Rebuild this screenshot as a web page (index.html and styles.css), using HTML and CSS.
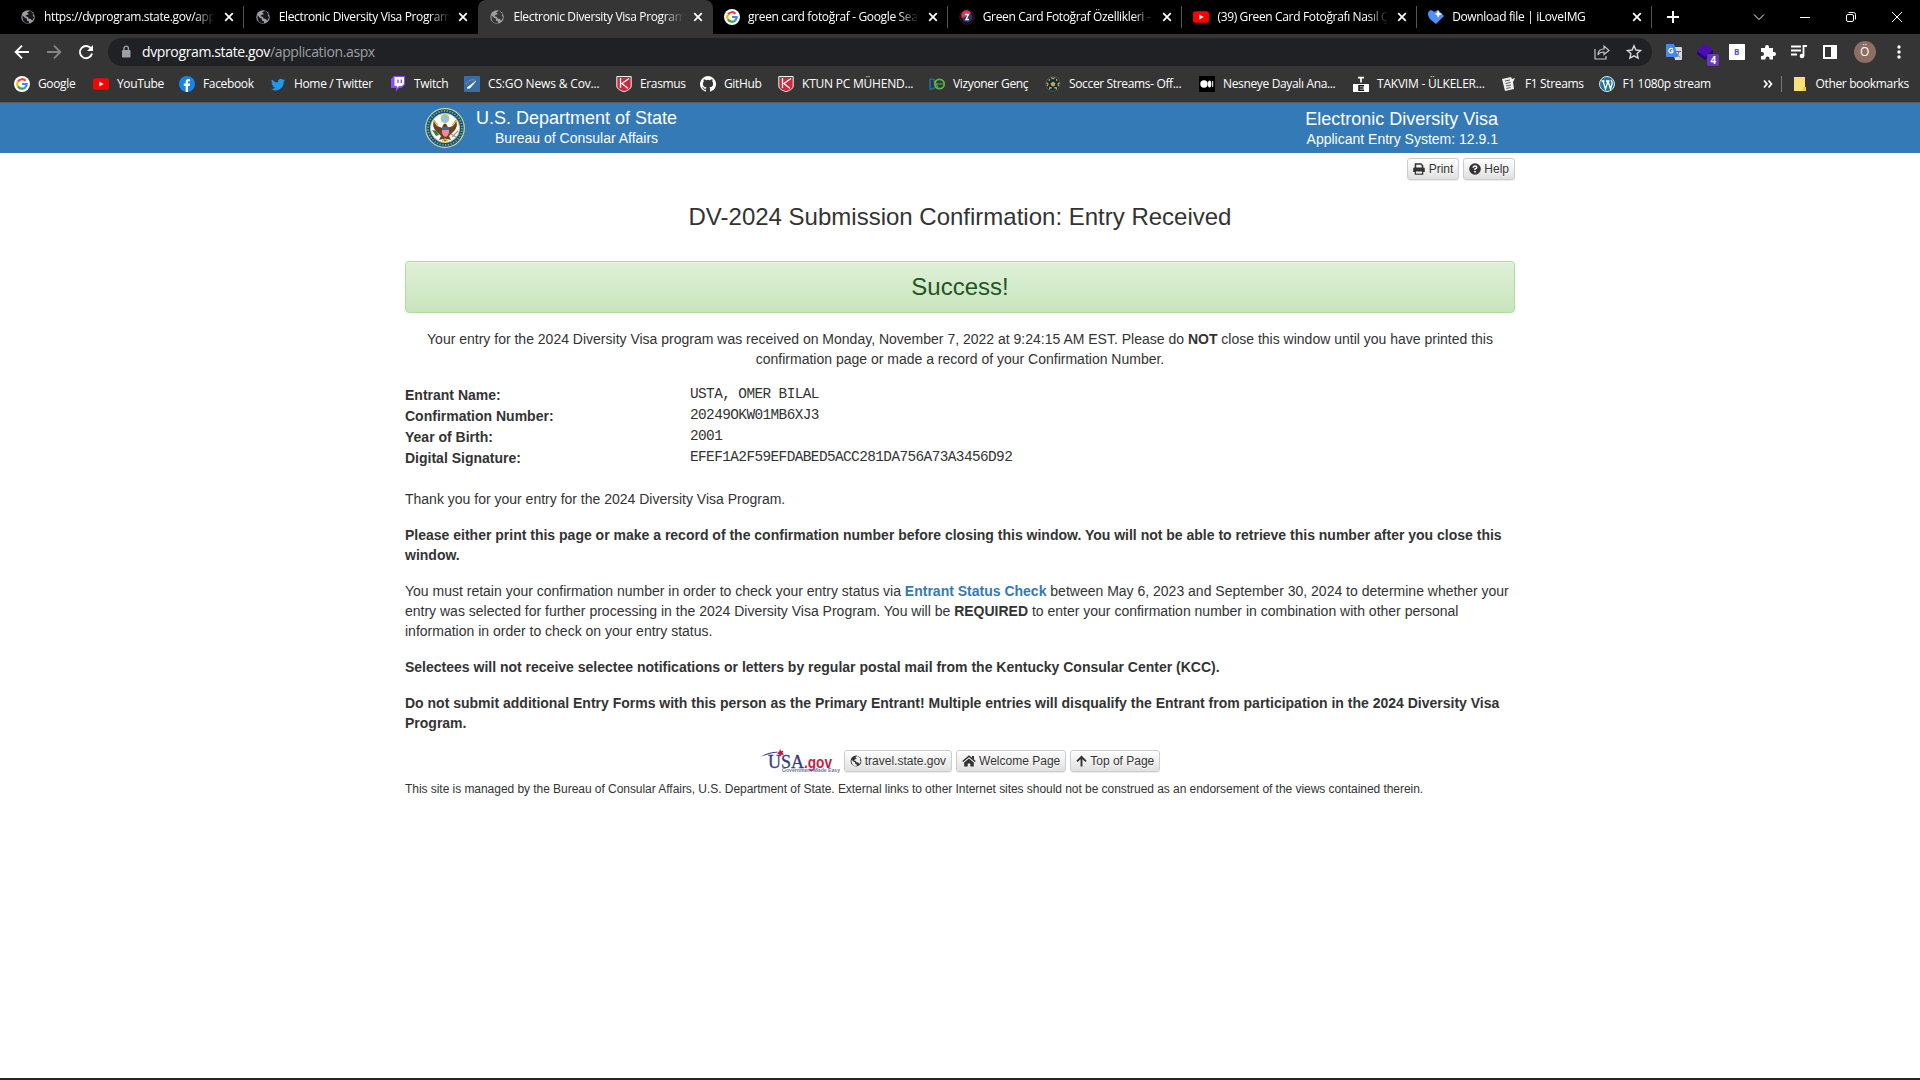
FILE: index.html
```html
<!DOCTYPE html>
<html lang="en">
<head>
<meta charset="utf-8">
<title>Electronic Diversity Visa Program</title>
<link rel="stylesheet" href="styles.css">
</head>
<body>
<svg class="defs" aria-hidden="true">
  <symbol id="globe" viewBox="0 0 16 16"><circle cx="8" cy="8" r="7.2" fill="currentColor"/><path class="hole" d="M2.2 6.2 5 9l1.8.5L7 12l2 .5V15C4 15 1.5 12 2.2 6.200zM7 2.800 10.500 1.200 14 5l-1 1.500 1.500 2-2 3.500-1.500-2-2.500-.5L8 8l-3-1 2-1.500 2-.5z"/></symbol>
  <symbol id="x" viewBox="0 0 10 10"><path d="m1.200 1.200 7.600 7.600m0-7.600-7.600 7.600" stroke="currentColor" stroke-width="1.700"/></symbol>
  <symbol id="google" viewBox="0 0 16 16"><circle cx="8" cy="8" r="8" fill="#fff"/><g fill="none" stroke-width="2.200"><path d="M11.500 4.700A4.700 4.700 0 0 0 4 5.600" stroke="#ea4335"/><path d="M4 5.500a4.700 4.700 0 0 0 0 5" stroke="#fbbc05"/><path d="M4 10.400a4.700 4.700 0 0 0 7.200 1.100" stroke="#34a853"/><path d="M11.100 11.600A4.700 4.700 0 0 0 12.700 8H8" stroke="#4285f4"/></g></symbol>
  <symbol id="youtube" viewBox="0 0 16 16"><rect y="2.300" width="16" height="11.400" rx="2.500" fill="red"/><path d="m6.300 5.500 4.400 2.500-4.400 2.500z" fill="#fff"/></symbol>
  <symbol id="ktun" viewBox="0 0 16 16"><path d="M.8.5h14.400v9.500c0 3-4 4.700-7.200 5.700C4.800 14.700.8 13 .8 10z" fill="#c92b3d" stroke="#eee"/><path d="M4.500 2v10M13 2.500 6 7.500l6 5" fill="none" stroke="#fff" stroke-width="1.300"/></symbol>
</svg>

<header class="browser">
  <div class="tabstrip">
    <div class="tab"><svg class="fav grey"><use href="#globe"/></svg><span class="name"><b>https://dvprogram.state.gov/app</b></span><svg class="close"><use href="#x"/></svg></div>
    <div class="tab bare"><svg class="fav grey"><use href="#globe"/></svg><span class="name"><b>Electronic Diversity Visa Program</b></span><svg class="close"><use href="#x"/></svg></div>
    <div class="tab active"><svg class="fav grey"><use href="#globe"/></svg><span class="name"><b>Electronic Diversity Visa Program</b></span><svg class="close"><use href="#x"/></svg></div>
    <div class="tab"><svg class="fav"><use href="#google"/></svg><span class="name"><b>green card fotoğraf - Google Sea</b></span><svg class="close"><use href="#x"/></svg></div>
    <div class="tab"><svg class="fav" viewBox="0 0 16 16"><circle cx="8" cy="8" r="7.300" fill="#15091a" stroke="#46101c"/><circle cx="8" cy="8" r="5.300" fill="#293566"/><path d="M3 9a5 5 0 0 1 9-5L8 7z" fill="#e23856"/><path d="M6 5.500h3.500L7 10.500h3" stroke="#fff" stroke-width="1.400" fill="none"/></svg><span class="name"><b>Green Card Fotoğraf Özellikleri -</b></span><svg class="close"><use href="#x"/></svg></div>
    <div class="tab"><svg class="fav"><use href="#youtube"/></svg><span class="name"><b>(39) Green Card Fotoğrafı Nasıl Ç</b></span><svg class="close"><use href="#x"/></svg></div>
    <div class="tab"><svg class="fav" viewBox="0 0 16 16"><path d="M0 5c0-4 4-5 6-2l2-1c1-1 3-1 4 1l4 4-8 8C4 12 0 9 0 5z" fill="#4d90fe"/><path d="m10 1 1.500 3 3 1-3 1-1.500 3-1-3-2-1 2-1z" fill="#fff"/></svg><span class="name"><b>Download file | iLoveIMG</b></span><svg class="close"><use href="#x"/></svg></div>
    <svg class="plus" viewBox="0 0 14 14"><path d="M7 1v12M1 7h12" stroke="#fff" stroke-width="2"/></svg>
    <div class="winctl">
      <svg viewBox="0 0 12 12"><path d="m1 3.500 5 5 5-5"/></svg>
      <svg viewBox="0 0 12 12"><path d="M1 6.500h10"/></svg>
      <svg viewBox="0 0 12 12"><rect x="1.500" y="3.500" width="7" height="7" rx="1.500"/><path d="M3.500 1.500H8.500a2 2 0 0 1 2 2V8.500"/></svg>
      <svg viewBox="0 0 12 12"><path d="m1 1 10 10M11 1 1 11"/></svg>
    </div>
  </div>

  <div class="toolbar">
    <svg class="nav" viewBox="0 0 16 16"><path d="M15 8H2m6-6.300L1.700 8 8 14.300"/></svg>
    <svg class="nav dim" viewBox="0 0 16 16"><path d="M1 8h13M8 1.700 14.300 8 8 14.300"/></svg>
    <svg class="nav" viewBox="0 0 16 16"><path d="M13.300 5A6.100 6.100 0 1 0 14 9.500"/><path d="M15 1v6H9z" fill="#fff" stroke="none"/></svg>
    <div class="omnibox">
      <svg class="lock" viewBox="0 0 10 14"><rect x="1" y="5" width="8.500" height="7.500" rx="1" fill="#9aa0a6"/><path d="M3 5V3.300a2.200 2.200 0 0 1 4.400 0V5" fill="none" stroke="#9aa0a6" stroke-width="1.400"/></svg>
      <span class="url">dvprogram.state.gov<i>/application.aspx</i></span>
      <svg class="act" viewBox="0 0 16 16"><path d="M1 5v10h11v-3M4 11c0-4 2-6 6-6V2l5 4.500-5 4V8C7 8 5 9 4 11z" fill="none" stroke="#c4c7c9" stroke-width="1.200"/></svg>
      <svg class="act" viewBox="0 0 16 16"><path d="m8 1.700 1.900 4.300 4.700.5-3.500 3.100 1 4.600L8 11.800l-4.100 2.400 1-4.600L1.400 6.500 6.100 6z" fill="none" stroke="#d5d7d9" stroke-width="1.400"/></svg>
    </div>
    <div class="exts">
      <svg viewBox="0 0 16 16"><path d="M6 3h9q1 0 1 1v11q0 1-1 1H9z" fill="#d5d9dd"/><path d="M0 0h8l4 13H1q-1 0-1-1z" fill="#4688f1"/><path d="M7 5.500A2.200 2.200 0 1 0 6.800 8V6.800H5" stroke="#fff" stroke-width="1.200" fill="none"/><path d="M9.500 7.500H15m-2 0q-1 4-3 5m0-3 4 4" stroke="#607080" fill="none"/></svg>
      <span class="cube"><svg viewBox="0 0 16 16"><path d="m0 7 8-7 8 6-8 7z" fill="#4e0ab9"/><path d="m0 7 8 6 8-7v3l-8 7-8-6z" fill="#27066f"/></svg><em>4</em></span>
      <span class="bsq">B</span>
      <svg viewBox="0 0 16 16"><path d="M1 4h4V3a2 2 0 0 1 4 0v1h4v4h1a2 2 0 0 1 0 4h-1v3.500H9.500v-1a2 2 0 0 0-4 0v1H1V12h1a2 2 0 0 0 0-4H1z" fill="#fff"/></svg>
      <svg viewBox="0 0 16 16"><path d="M0 2.500h10M0 6.500h10M0 10.500h6M12.500 12V2H16" stroke="#fff" stroke-width="1.800" fill="none"/><circle cx="11" cy="12" r="2.300" fill="#fff"/></svg>
      <svg viewBox="0 0 16 16"><path d="M1 1h14v14H1zM3 3v10h6V3z" fill="#fff" fill-rule="evenodd"/></svg>
      <span class="avatar">Ö</span>
      <svg viewBox="0 0 16 16"><g fill="#fff"><circle cx="8" cy="3" r="1.700"/><circle cx="8" cy="8" r="1.700"/><circle cx="8" cy="13" r="1.700"/></g></svg>
    </div>
  </div>

  <nav class="bookmarks">
    <a><svg><use href="#google"/></svg><span>Google</span></a>
    <a><svg><use href="#youtube"/></svg><span>YouTube</span></a>
    <a><svg viewBox="0 0 16 16"><circle cx="8" cy="8" r="8" fill="#1585ee"/><path d="M6.700 16V10H4.800V7.500h1.900V6c0-2 1-3 2.900-3l1.500.1v2.100H10c-.8 0-1 .4-1 1v1.300h2.100L10.700 10H9v6z" fill="#fff"/></svg><span>Facebook</span></a>
    <a><svg viewBox="0 0 26 26"><path transform="translate(1 2)" d="M23.600 4.900c-.8.400-1.700.6-2.700.8 1-.6 1.700-1.500 2-2.600-.9.500-1.900.9-3 1.100a4.700 4.700 0 0 0-8 4.300A13.300 13.300 0 0 1 2.200 3.600a4.700 4.700 0 0 0 1.400 6.200 4.700 4.700 0 0 1-2.100-.6c0 2.300 1.600 4.200 3.800 4.700-.7.200-1.400.2-2.100.1a4.700 4.700 0 0 0 4.400 3.200A9.500 9.500 0 0 1 .7 19.100 13.300 13.300 0 0 0 21.200 7.300c.9-.7 1.800-1.500 2.400-2.400z" fill="#1d9bf0"/></svg><span>Home / Twitter</span></a>
    <a><svg viewBox="0 0 16 16"><path d="M4 0h11v8.500L11.500 12H9l-3 3.500V12H1V3z" fill="#9146ff"/><path d="M4.500 1H14v7l-2 2H9l-2 2v-2H4.500z" fill="#fff"/><path d="M8 3.500v3.500m3.300-3.500v3.500" stroke="#9146ff" stroke-width="1.400"/></svg><span>Twitch</span></a>
    <a class="csgo"><svg viewBox="0 0 16 16"><path d="M0 0h16v16H0z" fill="#3b6ca4"/><path d="m3 12 1-1 8-6-6 7-2 .5z" fill="#fff" stroke="#fff" stroke-width=".6"/><path d="M2 8q3-5 9-4" stroke="#9db9da" fill="none" stroke-dasharray="1"/></svg><span>CS:GO News &amp; Cov...</span></a>
    <a><svg><use href="#ktun"/></svg><span>Erasmus</span></a>
    <a><svg viewBox="0 0 16 16"><path d="M8 0a8 8 0 0 0-2.530 15.590c.4.070.55-.17.550-.38v-1.490c-2.230.48-2.700-.94-2.700-.94-.36-.93-.89-1.170-.89-1.170-.73-.5.050-.49.050-.49.810.06 1.230.83 1.230.83.720 1.230 1.880.87 2.340.67.070-.52.280-.87.510-1.070-1.780-.2-3.640-.89-3.640-3.950 0-.87.310-1.590.82-2.150-.08-.2-.36-1.020.08-2.120 0 0 .67-.21 2.200.82a7.500 7.500 0 0 1 4 0c1.530-1.040 2.200-.82 2.200-.82.440 1.100.16 1.920.08 2.120.51.560.82 1.270.82 2.150 0 3.070-1.870 3.750-3.650 3.950.29.250.54.730.54 1.480v2.190c0 .21.150.46.550.38A8 8 0 0 0 8 0z" fill="#fff"/></svg><span>GitHub</span></a>
    <a class="pc"><svg><use href="#ktun"/></svg><span>KTUN PC MÜHEND...</span></a>
    <a><svg viewBox="0 0 16 16"><path d="M1 3v10h2q4-1 4-5T3 3H1" fill="none" stroke="#16739c" stroke-width="1.600"/><circle cx="10.500" cy="8" r="4.700" fill="none" stroke="#57b947" stroke-width="1.700"/><path d="M7 8h7M5 5l4 6" stroke="#57b947"/></svg><span>Vizyoner Genç</span></a>
    <a><svg viewBox="0 0 16 16"><circle cx="8" cy="8" r="7.200" fill="#142b30" stroke="#44545a"/><path d="m8 5.500 2.500 1.800-1 3h-3l-1-3z" fill="#bba457"/><path d="m6 1.500 2 1.200 2-1.200M1.500 6.500 3 8l-.7 2.300M14.500 6.500 13 8l.7 2.300M4.500 13.500l.3-2 2 .5M11.500 13.500l-.3-2-2 .5M4.500 3l-.3 2M11.500 3l.3 2" fill="none" stroke="#bba457" stroke-width="1.300"/></svg><span>Soccer Streams- Off...</span></a>
    <a><svg viewBox="0 0 16 16"><path d="M0 0h16v16H0z"/><circle cx="5" cy="8" r="3.700" fill="#fff"/><ellipse cx="10.600" cy="8" rx="1.700" ry="3.500" fill="#fff"/><path d="M13.700 5v6" stroke="#fff"/></svg><span>Nesneye Dayalı Ana...</span></a>
    <a class="takvim"><svg viewBox="0 0 16 16"><path d="M0 8h16v8H0z" fill="#fff"/><path d="M5 1.700h6M8 1v5.500" stroke="#fff" stroke-width="1.700"/><path d="M11 9.700H6v4.600h5M6 12h4.500" stroke="#111" stroke-width="1.400" fill="none"/></svg><span>TAKVIM - ÜLKELER...</span></a>
    <a><svg viewBox="0 0 16 16"><path d="m1 3 9-2 1 2 3-1-2 4 1 7-9 2z" fill="#eee"/><path d="m4 5 5-1M4.500 7.500l5-1M5 10l5-1M5.500 12.500l4-1" stroke="#555"/></svg><span>F1 Streams</span></a>
    <a><svg viewBox="0 0 16 16"><circle cx="8" cy="8" r="7.500" fill="#21759b" stroke="#dce8ee"/><path d="M2.500 5h3m1.500 0h3.500M4 5l2.500 8L8.500 7 8 5m1 0 2.500 8L13 8q.5-2-1-4" fill="none" stroke="#fff" stroke-width="1.300"/></svg><span>F1 1080p stream</span></a>
    <svg class="more" viewBox="0 0 10 10"><path d="m1 1.500 3 3.500-3 3.500m4.500-7 3 3.500-3 3.500" fill="none" stroke="#fff" stroke-width="1.700"/></svg>
    <a class="other"><svg viewBox="0 0 16 16"><path d="M1 1h11v11l1 3H1z" fill="#fddf78"/><path d="M10 11h3v4h-3z" fill="#f4c443"/></svg><span>Other bookmarks</span></a>
  </nav>
</header>

<div class="banner">
  <div class="inner">
    <svg class="seal" viewBox="0 0 40 40"><circle cx="20" cy="20" r="19.300" fill="#0e5184" stroke="#d8d58c" stroke-width="1.200"/><circle cx="20" cy="20" r="17" fill="none" stroke="#86a582" stroke-width="1.800" stroke-dasharray="1.300 1.500"/><circle cx="20" cy="20" r="14.600" fill="#fff" stroke="#cfc77b"/><circle cx="20" cy="10.500" r="4" fill="#8bc5e6" stroke="#d9bd54"/><path d="M9 12q1 6 6 7l2 1 1-3q2-3 4 0l1 3 2-1q5-1 6-7 3 8-4 13l-3 3 2 4-4-1-2 3-2-3-4 1 2-4-3-3q-7-5-4-13z" fill="#6c4020"/><path d="M9 12q2 4 4 5M31 12q-2 4-4 5M17 33l3-2 3 2" stroke="#d8af38" stroke-width="1.500" fill="none"/><path d="M17 19h7v3h-7z" fill="#2e6da4"/><path d="M17 22h7v3q-1 3-3.500 4Q18 28 17 25z" fill="#ed8b92"/><path d="m7 22 4 6 3-1-2-4z" fill="#348047"/><path d="m27 29 6-6m-7 3 5 3" stroke="#9b9b9b" stroke-width="1.300"/></svg>
    <div class="brand"><div class="big">U.S. Department of State</div><div>Bureau of Consular Affairs</div></div>
    <div class="system"><div class="big">Electronic Diversity Visa</div><div>Applicant Entry System: 12.9.1</div></div>
  </div>
</div>

<main class="page">
  <div class="tools">
    <a class="btn"><svg viewBox="0 0 12 12"><path d="M2.500 5V1h5.500l1.500 1.500V5M2.500 8v3h7V8" fill="none" stroke="#333" stroke-width="1.500"/><path d="M1.500 4.500h9q1.300 0 1.300 1.300V9H.2V5.800q0-1.300 1.300-1.300z" fill="#333"/><path d="M3 8.500h6v2H3z" fill="#eee"/></svg>Print</a>
    <a class="btn"><svg viewBox="0 0 12 12"><circle cx="6" cy="6" r="5.800" fill="#333"/><path d="M4.200 4.700q0-1.700 1.800-1.700t1.800 1.500Q7.800 5.500 6 6v1" stroke="#fff" stroke-width="1.500" fill="none"/><path d="M5.200 8h1.700v1.600H5.200z" fill="#fff"/></svg>Help</a>
  </div>
  <h1>DV-2024 Submission Confirmation: Entry Received</h1>
  <div class="success">Success!</div>
  <p class="notice">Your entry for the 2024 Diversity Visa program was received on Monday, November 7, 2022 at 9:24:15 AM EST. Please do <b>NOT</b> close this window until you have printed this confirmation page or made a record of your Confirmation Number.</p>
  <dl>
    <dt>Entrant Name:</dt><dd>USTA, OMER BILAL</dd>
    <dt>Confirmation Number:</dt><dd>20249OKW01MB6XJ3</dd>
    <dt>Year of Birth:</dt><dd>2001</dd>
    <dt>Digital Signature:</dt><dd>EFEF1A2F59EFDABED5ACC281DA756A73A3456D92</dd>
  </dl>
  <p>Thank you for your entry for the 2024 Diversity Visa Program.</p>
  <p><b>Please either print this page or make a record of the confirmation number before closing this window. You will not be able to retrieve this number after you close this window.</b></p>
  <p>You must retain your confirmation number in order to check your entry status via <b class="link">Entrant Status Check</b> between May 6, 2023 and September 30, 2024 to determine whether your entry was selected for further processing in the 2024 Diversity Visa Program. You will be <b>REQUIRED</b> to enter your confirmation number in combination with other personal information in order to check on your entry status.</p>
  <p><b>Selectees will not receive selectee notifications or letters by regular postal mail from the Kentucky Consular Center (KCC).</b></p>
  <p><b>Do not submit additional Entry Forms with this person as the Primary Entrant! Multiple entries will disqualify the Entrant from participation in the 2024 Diversity Visa Program.</b></p>
  <footer>
    <div class="links">
      <svg class="usa" viewBox="0 0 80 24"><path d="M0 8Q10 2 20 3q-10 1-20 5z" fill="#3c4080"/><text x="8" y="19" class="us" textLength="36" lengthAdjust="spacingAndGlyphs">USA</text><text x="44" y="19" class="gov" textLength="28" lengthAdjust="spacingAndGlyphs">.gov</text><path d="m20 0 1.200 2.200 2.300-.4-1 2 1.500 1.700-2.500.2-1.500 2-.8-2.400-2.200-1 2-1.200z" fill="#c8143c"/><text x="22" y="23" class="tag" textLength="58" lengthAdjust="spacingAndGlyphs">Government Made Easy</text></svg>
      <a class="btn"><svg class="dark"><use href="#globe"/></svg>travel.state.gov</a>
      <a class="btn"><svg class="wide" viewBox="0 0 14 12"><path d="m.7 6.500 6.300-5.300 6.300 5.300" fill="none" stroke="#333" stroke-width="1.600"/><path d="M7 3.500 11.800 7.500V11.500H8.300V8.500H5.700v3H2.200V7.500zM10 1h2v3.500l-2-1.700z" fill="#333"/></svg>Welcome Page</a>
      <a class="btn"><svg class="arrow" viewBox="0 0 11 12"><path d="M5.500 11.500V2M1 6.300l4.500-4.500L10 6.300" fill="none" stroke="#333" stroke-width="1.900"/></svg>Top of Page</a>
    </div>
    <small>This site is managed by the Bureau of Consular Affairs, U.S. Department of State. External links to other Internet sites should not be construed as an endorsement of the views contained therein.</small>
  </footer>
</main>
<div class="edge"></div>
</body>
</html>
```

FILE: styles.css
```css
* { box-sizing: border-box; }
body { margin: 0; height: 1080px; overflow: hidden; display: flex; flex-direction: column; background: #fff; color: #333; font: 14px/20px "Liberation Sans", Arial, sans-serif; }
svg { display: block; flex: none; }
.defs { position: absolute; width: 0; height: 0; }

.browser { flex: none; height: 103px; background: #353535; color: #fff; border-bottom: 1px solid #5a5a5a; font: 12px/16px "Open Sans", "Noto Sans", sans-serif; }
.tabstrip { height: 34px; background: #000; display: flex; align-items: center; padding-left: 9px; }
.tab { flex: none; width: 234.700px; height: 34px; padding: 0 10.500px 0 11px; display: flex; align-items: center; border-right: 1px solid #4a4a4a; border-image: linear-gradient(transparent 7px, #555 7px, #555 27px, transparent 27px) 1; border-width: 0 1px 0 0; }
.tab.bare, .tab.active { border-image: none; border-color: transparent; }
.tab.active { background: #353535; border-radius: 8px 8px 0 0; --hole: #353535; }
.fav { width: 16px; height: 16px; }
.grey { color: #9aa0a6; padding: 0.500px; }
.hole { fill: var(--hole, #171717); }
.name { flex: none; width: 171px; margin-left: 8px; overflow: hidden; white-space: nowrap; -webkit-mask-image: linear-gradient(90deg, #000 150px, transparent 171px); mask-image: linear-gradient(90deg, #000 150px, transparent 171px); }
.name b { font-weight: 400; letter-spacing: -0.350px; }
.close { width: 10px; height: 10px; margin-left: 8.500px; color: #fff; }
.plus { width: 14px; height: 14px; margin-left: 14px; }
.winctl { margin-left: auto; padding-right: 17px; display: flex; gap: 34px; height: 28px; align-items: center; }
.winctl svg { width: 12px; height: 12px; fill: none; stroke: #fff; stroke-width: 1; }

.toolbar { height: 36px; display: flex; align-items: center; padding: 0 16px 0 14px; }
.nav { width: 16px; height: 16px; margin-right: 16px; fill: none; stroke: #fff; stroke-width: 1.900; }
.nav.dim { stroke: #858585; }
.omnibox { width: 1544px; height: 28px; margin-left: -2px; border-radius: 14px; background: #202124; display: flex; align-items: center; padding: 0 10px 0 13px; }
.lock { width: 10px; height: 14px; }
.url { flex: 1; margin-left: 11px; font-size: 14px; line-height: 20px; letter-spacing: -0.370px; }
.url i { font-style: normal; color: #9aa0a6; }
.act { width: 16px; height: 16px; margin-left: 16px; }
.exts { flex: 1; display: flex; align-items: center; justify-content: space-between; padding-left: 14px; margin-right: -14px; padding-right: 11px; }
.exts > svg, .cube svg { width: 16px; height: 16px; }
.cube { position: relative; }
.cube em { position: absolute; left: 10px; top: 10px; width: 12px; height: 12px; border-radius: 2px; background: #673ab7; font: bold 10px/12px "Open Sans", sans-serif; text-align: center; }
.bsq { width: 16px; height: 16px; background: #fff; color: #5a55b5; font: bold 8px/16px "Open Sans", sans-serif; text-align: center; }
.avatar { width: 22px; height: 22px; border-radius: 50%; background: #8d6e63; font-size: 12px; line-height: 22px; text-align: center; }

.bookmarks { height: 28px; padding-left: 14px; display: grid; align-items: center; grid-template-columns: 79px 86px 91px 120px 74px 152px 84px 78px 151px 116px 154px 154px 148px 97.500px 164px 18px 1fr; }
.bookmarks a { display: flex; align-items: center; gap: 8px; white-space: nowrap; letter-spacing: -0.350px; }
.bookmarks .csgo { letter-spacing: -0.150px; }
.bookmarks .pc, .bookmarks .takvim { letter-spacing: -0.220px; }
.bookmarks a svg { width: 16px; height: 16px; }
.more { width: 10px; height: 10px; }
.bookmarks .other { height: 16px; padding-left: 11px; gap: 7px; border-left: 1px solid #777; }

.banner { flex: none; height: 50px; background: #337ab7; color: #fff; font-size: 14px; }
.inner { width: 1110px; height: 50px; margin: 0 auto; padding: 5px 17px 0 20px; display: flex; }
.seal { width: 40px; height: 40px; }
.big { font-size: 18px; }
.brand { margin: 0 auto 0 11px; text-align: center; }
.system { margin-top: 1px; text-align: right; }

.page { width: 1110px; margin: 0 auto; padding-top: 5px; flex: 1; }
.tools { display: flex; justify-content: flex-end; gap: 4px; }
.btn { --hole: #eee; height: 22px; padding: 1px 5px; display: flex; align-items: center; gap: 3px; border: 1px solid #ccc; border-radius: 3px; background: linear-gradient(#fff, #e0e0e0); box-shadow: 0 1px 1px rgba(0, 0, 0, .08); font-size: 12px; line-height: 18px; white-space: nowrap; text-shadow: 0 1px 0 #fff; }
.btn svg { width: 12px; height: 12px; }
.tools .btn:first-child { gap: 4px; }
.btn .wide { width: 14px; }
.btn .arrow { width: 11px; }
.dark { color: #333; }
h1 { margin: 23px 0 30px; font-size: 24px; line-height: 28px; font-weight: 400; text-align: center; }
.success { height: 52px; border: 1px solid #b2dba1; border-radius: 4px; background: linear-gradient(#dff0d8, #c8e5bc); box-shadow: inset 0 1px 0 rgba(255, 255, 255, .25), 0 1px 2px rgba(0, 0, 0, .05); color: #215428; font-size: 24px; line-height: 50px; text-align: center; }
p { margin: 0 0 16px; }
.notice { margin-top: 16px; text-align: center; }
dl { margin: 0 0 20px; display: grid; grid-template-columns: 285px 1fr; grid-auto-rows: 21px; line-height: 21px; }
dt { font-weight: 700; }
dd { margin: -1px 0 0; font: 14.400px/21px "Liberation Mono", monospace; letter-spacing: -0.580px; }
.link { color: #337ab7; }
.links { display: flex; justify-content: center; gap: 4px; margin-top: 17px; }
.usa { width: 80px; height: 24px; margin: -1px 0 -1px; }
.us { font: 19px "Liberation Serif", serif; fill: #343a7c; stroke: #343a7c; stroke-width: .3; }
.gov { font: bold 16px "Liberation Sans", sans-serif; fill: #c51e45; }
.tag { font: bold 5px "Liberation Sans", sans-serif; fill: #7477a5; }
small { display: block; margin-top: 7px; font-size: 12px; line-height: 20px; letter-spacing: -0.046px; }
.edge { flex: none; height: 2px; background: #252525; }
```
